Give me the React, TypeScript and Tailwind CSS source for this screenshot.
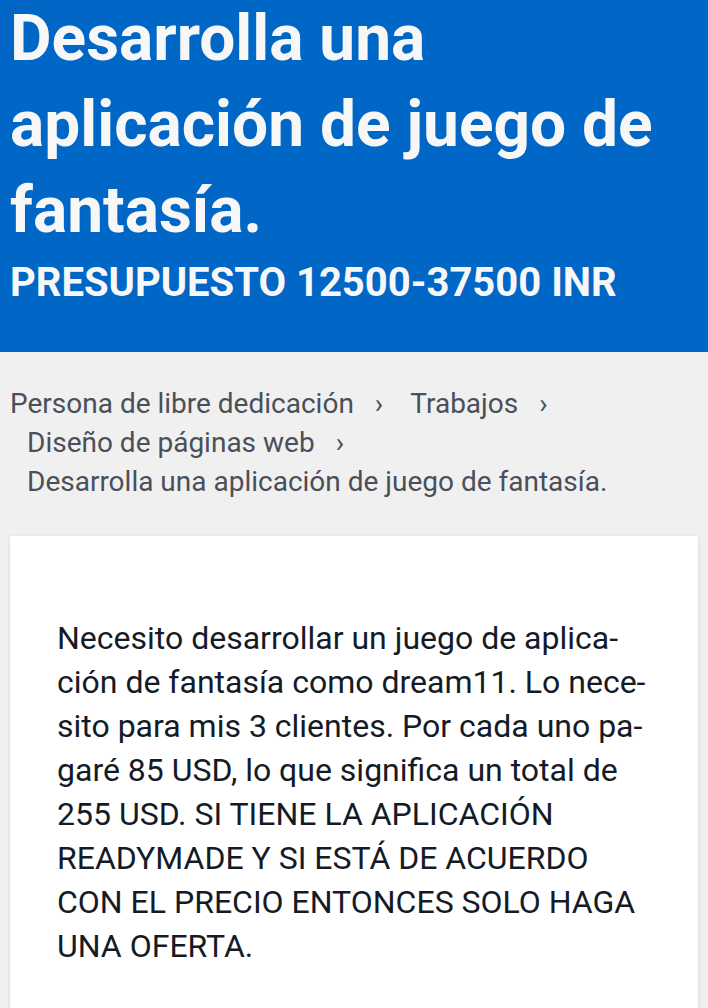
import React from "react";

const crumbs = [
  "Persona de libre dedicación",
  "Trabajos",
  "Diseño de páginas web",
  "Desarrolla una aplicación de juego de fantasía.",
];

const bodyLines = [
  "Necesito desarrollar un juego de aplica-",
  "ción de fantasía como dream11. Lo nece-",
  "sito para mis 3 clientes. Por cada uno pa-",
  "garé 85 USD, lo que significa un total de",
  "255 USD. SI TIENE LA APLICACIÓN",
  "READYMADE Y SI ESTÁ DE ACUERDO",
  "CON EL PRECIO ENTONCES SOLO HAGA",
  "UNA OFERTA.",
];

export default function App() {
  return (
    <div
      className="min-h-[1008px] w-[708px] overflow-hidden bg-[#f0f0f0]"
      style={{ fontFamily: "Roboto, 'Noto Sans', sans-serif" }}
    >
      <header className="flex h-[352px] flex-col bg-[#0067c6] px-[10px] text-[#f7f7f7]">
        <h1 className="-mt-[4px] text-[64px] font-bold leading-[86px]">
          Desarrolla una aplicación de juego de fantasía.
        </h1>
        <div className="mt-[5px] text-[40px] font-bold leading-[48px]">
          PRESUPUESTO 12500-37500 INR
        </div>
      </header>

      <nav className="px-[10px] pt-[32px]">
        <ol className="flex flex-wrap text-[28px] leading-[39px] text-[#4a4f59]">
          {crumbs.map((c, i) => (
            <li key={c} className={i === 0 ? "flex" : "ml-[17px] flex"}>
              <span>{c}</span>
              {i < crumbs.length - 1 && (
                <span className="ml-[21px] pr-[10px]">›</span>
              )}
            </li>
          ))}
        </ol>
      </nav>

      <main className="mt-[35px] px-[10px]">
        <section className="min-h-[480px] bg-white pl-[47px] pr-[40px] pt-[80px] pb-[40px] shadow-[0_1px_4px_rgba(0,0,0,0.12)]">
          <p className="text-[32px] leading-[44px] text-[#151b26]">
            {bodyLines.map((l, i) => (
              <React.Fragment key={i}>
                {l}
                {i < bodyLines.length - 1 && <br />}
              </React.Fragment>
            ))}
          </p>
        </section>
      </main>
    </div>
  );
}
